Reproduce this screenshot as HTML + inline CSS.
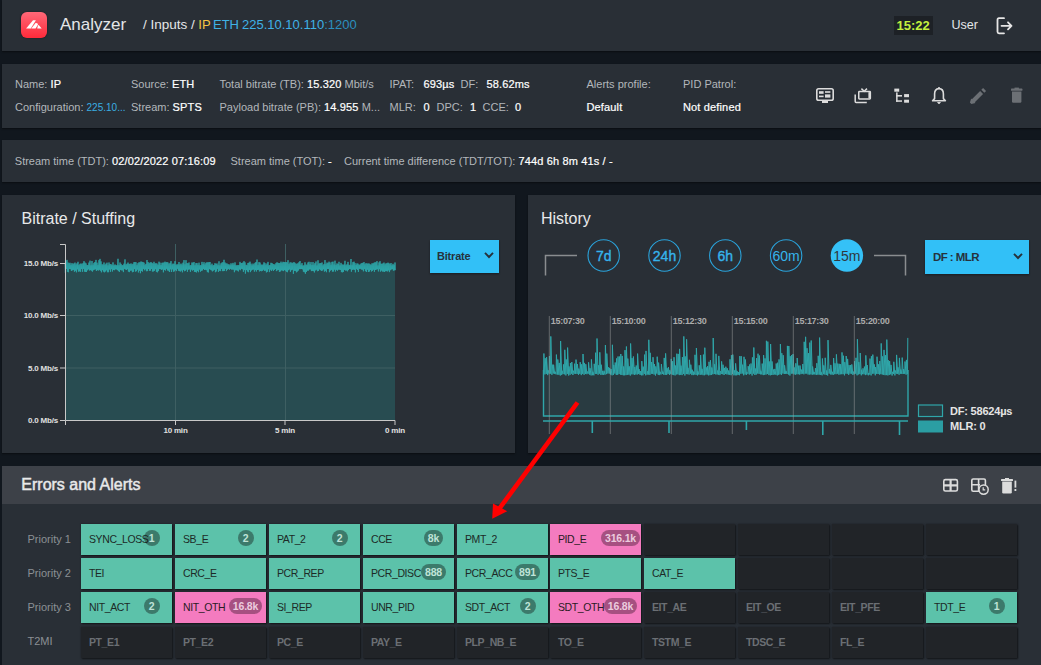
<!DOCTYPE html>
<html><head><meta charset="utf-8"><style>
*{margin:0;padding:0;box-sizing:border-box}
html,body{width:1041px;height:665px;overflow:hidden;background:#11171e;font-family:"Liberation Sans", sans-serif}
.r,.t,.c,.b{position:absolute}
.t{white-space:nowrap} .t b{color:#fff;font-weight:400;-webkit-text-stroke:0.2px #fff;letter-spacing:0.15px}
.c{width:91px;height:31px;box-shadow:1px 1px 1.5px rgba(0,0,0,.5),0 0 1.5px rgba(0,0,0,.35)}
.b{width:60px;height:16px;text-align:center;font-size:0}
.b span{display:inline-block;min-width:16px;height:16px;padding:0 4px;border-radius:8px;font:700 10.5px/16px "Liberation Sans", sans-serif;letter-spacing:-0.2px}
</style></head><body>
<div class="r" style="left:2px;top:0px;width:1039px;height:51px;background:#292f36;box-shadow:0 1px 1.5px rgba(0,0,0,.45)"></div><div class="r" style="left:2px;top:64px;width:1039px;height:64px;background:#292f36;box-shadow:0 1px 1.5px rgba(0,0,0,.45)"></div><div class="r" style="left:2px;top:140px;width:1039px;height:42px;background:#292f36;box-shadow:0 1px 1.5px rgba(0,0,0,.45)"></div><div class="r" style="left:2px;top:195px;width:513px;height:258px;background:#292f36;box-shadow:0 1px 1.5px rgba(0,0,0,.45)"></div><div class="r" style="left:528px;top:195px;width:513px;height:258px;background:#292f36;box-shadow:0 1px 1.5px rgba(0,0,0,.45)"></div><div class="r" style="left:2px;top:466px;width:1039px;height:38px;background:#3d4148;"></div><div class="r" style="left:2px;top:504px;width:1039px;height:161px;background:#292f36;"></div><div class="r" style="left:21px;top:12px;width:26px;height:26px;border-radius:6px;background:linear-gradient(#ff6878,#ff2a3a);box-shadow:0 0 2px rgba(0,0,0,.5)"></div><svg class="r" style="left:21px;top:12px" width="26" height="26" viewBox="0 0 26 26" fill="#fff"><polygon points="5.1,16.5 9.8,16.5 14.9,8.2 12.0,8.2"/><polygon points="10.3,16.5 14.6,16.5 17.0,12.6 16.4,11.2 14.6,11.1"/><polygon points="16.2,16.5 20.7,16.5 17.7,12.9 16.9,13.4"/></svg><div class="t" style="left:60.0px;top:15.91px;font-size:17px;line-height:17px;color:#e4e6e8;font-weight:400;">Analyzer</div><div class="t" style="left:143.0px;top:17.57px;font-size:13.5px;line-height:13.5px;color:#e4e6e8;font-weight:400;">/ Inputs /</div><div class="t" style="left:198.3px;top:18.00px;font-size:13px;line-height:13px;color:#f6c544;font-weight:400;">IP</div><div class="t" style="left:213.0px;top:18.00px;font-size:13px;line-height:13px;color:#3fb2e6;font-weight:400;">ETH</div><div class="t" style="left:242.0px;top:18.00px;font-size:13px;line-height:13px;color:#3fb2e6;font-weight:400;">225.10.10.110<span style="color:#2b8fbf">:1200</span></div><div class="r" style="left:894px;top:16px;width:39px;height:19px;background:#1d2126;"></div><div class="t" style="left:896.5px;top:18.50px;font-size:13px;line-height:13px;color:#c3f03e;font-weight:700;">15:22</div><div class="t" style="left:951.5px;top:19.42px;font-size:12.5px;line-height:12.5px;color:#e4e6e8;font-weight:400;">User</div><svg class="r" style="left:994px;top:15px" width="21" height="21" viewBox="0 0 21 21" fill="none" stroke="#e6e6e6" stroke-width="1.8" stroke-linecap="round" stroke-linejoin="round"><path d="M10 3.2 H5 Q3.5 3.2 3.5 4.7 V16.8 Q3.5 18.3 5 18.3 H10"/><path d="M7.5 10.8 H17.5 M14 7.3 L17.5 10.8 L14 14.3"/></svg><div class="t" style="left:15.0px;top:78.69px;font-size:11px;line-height:11px;color:#b3b7bb;font-weight:400;">Name: <b>IP</b></div><div class="t" style="left:15.0px;top:101.69px;font-size:11px;line-height:11px;color:#b3b7bb;font-weight:400;">Configuration: <span style="color:#3aaee2;font-size:10px">225.10...</span></div><div class="t" style="left:131.0px;top:78.69px;font-size:11px;line-height:11px;color:#b3b7bb;font-weight:400;">Source: <b>ETH</b></div><div class="t" style="left:131.0px;top:101.69px;font-size:11px;line-height:11px;color:#b3b7bb;font-weight:400;">Stream: <b>SPTS</b></div><div class="t" style="left:219.5px;top:78.69px;font-size:11px;line-height:11px;color:#b3b7bb;font-weight:400;">Total bitrate (TB): <b>15.320</b> Mbit/s</div><div class="t" style="left:219.5px;top:101.69px;font-size:11px;line-height:11px;color:#b3b7bb;font-weight:400;">Payload bitrate (PB): <b>14.955</b> M...</div><div class="t" style="left:389.5px;top:78.69px;font-size:11px;line-height:11px;color:#b3b7bb;font-weight:400;">IPAT:</div><div class="t" style="left:423.5px;top:78.69px;font-size:11px;line-height:11px;color:#b3b7bb;font-weight:400;"><b>693µs</b></div><div class="t" style="left:460.5px;top:78.69px;font-size:11px;line-height:11px;color:#b3b7bb;font-weight:400;">DF:</div><div class="t" style="left:486.5px;top:78.69px;font-size:11px;line-height:11px;color:#b3b7bb;font-weight:400;"><b>58.62ms</b></div><div class="t" style="left:389.5px;top:101.69px;font-size:11px;line-height:11px;color:#b3b7bb;font-weight:400;">MLR:</div><div class="t" style="left:423.5px;top:101.69px;font-size:11px;line-height:11px;color:#b3b7bb;font-weight:400;"><b>0</b></div><div class="t" style="left:436.5px;top:101.69px;font-size:11px;line-height:11px;color:#b3b7bb;font-weight:400;">DPC:</div><div class="t" style="left:470.0px;top:101.69px;font-size:11px;line-height:11px;color:#b3b7bb;font-weight:400;"><b>1</b></div><div class="t" style="left:482.5px;top:101.69px;font-size:11px;line-height:11px;color:#b3b7bb;font-weight:400;">CCE:</div><div class="t" style="left:515.0px;top:101.69px;font-size:11px;line-height:11px;color:#b3b7bb;font-weight:400;"><b>0</b></div><div class="t" style="left:586.5px;top:78.69px;font-size:11px;line-height:11px;color:#b3b7bb;font-weight:400;">Alerts profile:</div><div class="t" style="left:586.5px;top:101.69px;font-size:11px;line-height:11px;color:#b3b7bb;font-weight:400;"><b>Default</b></div><div class="t" style="left:683.0px;top:78.69px;font-size:11px;line-height:11px;color:#b3b7bb;font-weight:400;">PID Patrol:</div><div class="t" style="left:683.0px;top:101.69px;font-size:11px;line-height:11px;color:#b3b7bb;font-weight:400;"><b>Not defined</b></div><svg class="r" style="left:814px;top:86px" width="22" height="20" viewBox="0 0 22 20"><rect x="2.8" y="2.8" width="16.4" height="11.4" rx="1.8" fill="none" stroke="#dcdcdc" stroke-width="1.6"/><rect x="8" y="15" width="6" height="2" fill="#dcdcdc"/><rect x="5" y="5.2" width="4.6" height="2.6" fill="#dcdcdc"/><rect x="5" y="9.6" width="4.6" height="1.6" fill="#dcdcdc"/><rect x="11" y="5.2" width="5.4" height="1.6" fill="#dcdcdc"/><rect x="11" y="8.4" width="5.4" height="3.2" fill="#dcdcdc"/></svg><svg class="r" style="left:852px;top:86px" width="22" height="20" viewBox="0 0 22 20" fill="none" stroke="#dcdcdc" stroke-width="1.5"><path d="M3.2 8.6 V15.6 Q3.2 16.5 4.1 16.5 H14.8"/><rect x="6.75" y="5.55" width="11.6" height="7.4" rx=".6"/><path d="M9.4 2.6 L12.2 5.2 L15 2.6"/><rect x="16.4" y="6.2" width="2.4" height="6.2" fill="#dcdcdc" stroke="none"/></svg><svg class="r" style="left:892px;top:86px" width="20" height="20" viewBox="0 0 20 20" fill="#dcdcdc"><rect x="2.3" y="2.6" width="4.9" height="3.1"/><rect x="4.1" y="6.4" width="1.5" height="9.4"/><rect x="4.1" y="9" width="5.9" height="1.6"/><rect x="4.1" y="14.3" width="5.9" height="1.5"/><rect x="12.1" y="8.1" width="4.9" height="3.1"/><rect x="12.1" y="13.7" width="4.9" height="3"/></svg><svg class="r" style="left:930px;top:86px" width="18" height="20" viewBox="0 0 18 20"><path d="M9 2.6 C5.6 2.6 4.6 5 4.6 8 V12.6 L2.6 14.8 H15.4 L13.4 12.6 V8 C13.4 5 12.4 2.6 9 2.6 Z" fill="none" stroke="#dcdcdc" stroke-width="1.6" stroke-linejoin="round"/><circle cx="9" cy="2" r="1" fill="#dcdcdc"/><path d="M7.6 16.6 H10.4 L9 17.6 Z" fill="#dcdcdc" stroke="#dcdcdc" stroke-width="1"/></svg><svg class="r" style="left:968px;top:86px" width="20" height="20" viewBox="0 0 20 20"><path d="M4.6 15.4 L13.6 6.4" stroke="#6c7075" stroke-width="4.2"/><path d="M14.8 5.2 L16.6 3.4" stroke="#6c7075" stroke-width="4.2"/><polygon points="1.9,16.6 3.2,12.5 7.5,16.9 3.4,18.1" fill="#6c7075"/></svg><svg class="r" style="left:1009px;top:86px" width="16" height="20" viewBox="0 0 16 20" fill="#6c7075"><rect x="2" y="2.6" width="11.4" height="2.2" rx=".6"/><rect x="5.5" y="1.6" width="4.4" height="1.4"/><path d="M3 5.6 H12.4 V15.6 Q12.4 16.8 11.2 16.8 H4.2 Q3 16.8 3 15.6 Z"/></svg><div class="t" style="left:14.8px;top:155.99px;font-size:11px;line-height:11px;color:#b3b7bb;font-weight:400;">Stream time (TDT): <b>02/02/2022 07:16:09</b></div><div class="t" style="left:230.5px;top:155.99px;font-size:11px;line-height:11px;color:#b3b7bb;font-weight:400;">Stream time (TOT): <b>-</b></div><div class="t" style="left:344.0px;top:155.99px;font-size:11px;line-height:11px;color:#b3b7bb;font-weight:400;">Current time difference (TDT/TOT): <b>744d 6h 8m 41s / -</b></div><div class="t" style="left:21.5px;top:210.66px;font-size:16px;line-height:16px;color:#e8e9ea;font-weight:400;">Bitrate / Stuffing</div><svg class="r" style="left:0;top:0" width="1041" height="665"><rect x="65" y="266" width="330" height="155" fill="#284c51"/><line x1="65" y1="315.5" x2="395" y2="315.5" stroke="#3e5f62" stroke-width="1"/><line x1="65" y1="368" x2="395" y2="368" stroke="#3e5f62" stroke-width="1"/><line x1="175.5" y1="244" x2="175.5" y2="421" stroke="#3e5f62" stroke-width="1"/><line x1="285.5" y1="244" x2="285.5" y2="421" stroke="#3e5f62" stroke-width="1"/><polyline points="65.0,262.9 65.4,272.9 66.0,260.8 66.4,268.9 67.0,259.9 67.4,271.8 68.0,262.5 68.4,272.2 69.0,263.2 69.4,269.0 70.0,262.8 70.4,269.2 71.0,264.8 71.4,270.9 72.0,263.1 72.4,270.3 73.0,264.3 73.4,269.9 74.0,263.4 74.4,271.7 75.0,262.6 75.4,270.7 76.0,264.5 76.4,272.3 77.0,263.3 77.4,269.3 78.0,261.8 78.4,271.6 79.0,265.0 79.4,271.3 80.0,263.9 80.4,271.8 81.0,263.5 81.4,269.0 82.0,264.2 82.4,271.8 83.0,263.2 83.4,268.9 84.0,261.2 84.4,271.6 85.0,262.6 85.4,271.9 86.0,263.4 86.4,272.0 87.0,265.0 87.4,270.3 88.0,265.1 88.4,269.3 89.0,262.6 89.4,270.5 90.0,260.7 90.4,270.1 91.0,265.3 91.4,270.7 92.0,261.0 92.4,271.6 93.0,264.7 93.4,270.2 94.0,262.9 94.4,269.6 95.0,262.0 95.4,269.3 96.0,259.9 96.4,271.0 97.0,262.7 97.4,270.1 98.0,264.9 98.4,270.5 99.0,260.2 99.4,269.8 100.0,258.9 100.4,270.7 101.0,261.4 101.4,272.3 102.0,264.3 102.4,270.1 103.0,264.6 103.4,271.6 104.0,262.5 104.4,272.3 105.0,264.8 105.4,271.5 106.0,263.7 106.4,270.3 107.0,262.7 107.4,272.2 108.0,265.3 108.4,272.2 109.0,262.5 109.4,269.5 110.0,264.1 110.4,271.8 111.0,264.2 111.4,269.1 112.0,265.2 112.4,271.5 113.0,262.4 113.4,270.0 114.0,265.4 114.4,270.2 115.0,264.5 115.4,269.3 116.0,265.1 116.4,269.3 117.0,265.4 117.4,270.1 118.0,258.8 118.4,271.1 119.0,265.2 119.4,271.9 120.0,262.5 120.4,269.9 121.0,263.9 121.4,270.3 122.0,265.2 122.4,270.4 123.0,265.1 123.4,272.1 124.0,263.7 124.4,268.9 125.0,259.4 125.4,269.4 126.0,264.5 126.4,270.0 127.0,263.8 127.4,269.2 128.0,262.6 128.4,271.6 129.0,263.8 129.4,272.1 130.0,264.0 130.4,270.6 131.0,263.4 131.4,270.5 132.0,264.4 132.4,272.2 133.0,263.8 133.4,271.8 134.0,262.2 134.4,269.1 135.0,262.0 135.4,271.6 136.0,262.3 136.4,271.2 137.0,265.1 137.4,269.6 138.0,263.2 138.4,272.4 139.0,262.3 139.4,270.7 140.0,262.4 140.4,273.2 141.0,261.5 141.4,271.0 142.0,261.9 142.4,271.6 143.0,262.1 143.4,268.9 144.0,262.7 144.4,270.3 145.0,264.8 145.4,269.3 146.0,263.9 146.4,271.2 147.0,260.0 147.4,271.1 148.0,262.0 148.4,269.0 149.0,263.4 149.4,270.8 150.0,262.7 150.4,270.7 151.0,262.1 151.4,269.0 152.0,262.9 152.4,271.5 153.0,263.6 153.4,271.4 154.0,261.8 154.4,270.8 155.0,263.5 155.4,269.2 156.0,263.3 156.4,271.8 157.0,263.6 157.4,272.3 158.0,264.9 158.4,271.1 159.0,261.7 159.4,269.1 160.0,262.7 160.4,269.1 161.0,265.0 161.4,269.8 162.0,262.8 162.4,269.4 163.0,262.7 163.4,272.3 164.0,262.6 164.4,269.9 165.0,261.7 165.4,270.5 166.0,262.5 166.4,268.8 167.0,262.0 167.4,270.4 168.0,262.6 168.4,270.7 169.0,264.2 169.4,272.0 170.0,262.9 170.4,269.3 171.0,261.1 171.4,272.0 172.0,264.5 172.4,269.3 173.0,263.6 173.4,271.7 174.0,263.9 174.4,271.3 175.0,261.2 175.4,270.1 176.0,264.9 176.4,271.1 177.0,264.3 177.4,268.8 178.0,264.5 178.4,270.7 179.0,262.0 179.4,271.1 180.0,264.5 180.4,271.5 181.0,263.6 181.4,270.5 182.0,264.6 182.4,272.3 183.0,262.7 183.4,269.9 184.0,260.1 184.4,271.2 185.0,264.3 185.4,270.7 186.0,260.2 186.4,269.5 187.0,263.1 187.4,271.8 188.0,263.4 188.4,269.6 189.0,262.5 189.4,269.3 190.0,265.3 190.4,271.8 191.0,265.1 191.4,269.6 192.0,262.5 192.4,270.6 193.0,262.8 193.4,270.0 194.0,262.0 194.4,271.8 195.0,265.2 195.4,272.0 196.0,263.1 196.4,272.4 197.0,263.1 197.4,270.9 198.0,264.9 198.4,272.2 199.0,262.7 199.4,269.5 200.0,265.3 200.4,271.7 201.0,265.2 201.4,270.8 202.0,261.9 202.4,270.4 203.0,264.1 203.4,269.0 204.0,262.2 204.4,270.0 205.0,264.5 205.4,269.7 206.0,262.8 206.4,270.2 207.0,262.3 207.4,272.1 208.0,262.5 208.4,272.4 209.0,262.2 209.4,269.1 210.0,262.0 210.4,269.7 211.0,265.1 211.4,270.3 212.0,263.7 212.4,271.4 213.0,265.4 213.4,270.6 214.0,265.0 214.4,269.8 215.0,263.2 215.4,272.2 216.0,263.9 216.4,271.4 217.0,263.5 217.4,268.8 218.0,265.2 218.4,271.9 219.0,261.3 219.4,270.7 220.0,265.3 220.4,271.1 221.0,263.4 221.4,268.9 222.0,262.6 222.4,271.1 223.0,262.2 223.4,271.1 224.0,259.8 224.4,270.9 225.0,262.5 225.4,268.8 226.0,263.5 226.4,271.1 227.0,263.5 227.4,269.7 228.0,264.4 228.4,268.9 229.0,264.3 229.4,269.7 230.0,265.2 230.4,268.9 231.0,263.3 231.4,269.5 232.0,264.5 232.4,269.5 233.0,262.9 233.4,269.6 234.0,264.6 234.4,272.2 235.0,262.4 235.4,270.3 236.0,265.3 236.4,270.2 237.0,265.4 237.4,270.6 238.0,265.1 238.4,271.4 239.0,265.2 239.4,269.5 240.0,261.9 240.4,270.2 241.0,263.0 241.4,268.8 242.0,263.0 242.4,269.2 243.0,262.5 243.4,271.8 244.0,261.2 244.4,270.1 245.0,262.4 245.4,273.6 246.0,264.8 246.4,270.0 247.0,265.2 247.4,271.5 248.0,263.0 248.4,272.2 249.0,262.7 249.4,269.9 250.0,261.7 250.4,272.1 251.0,263.7 251.4,270.5 252.0,265.3 252.4,269.7 253.0,263.6 253.4,269.5 254.0,264.5 254.4,271.6 255.0,262.9 255.4,270.1 256.0,262.0 256.4,271.5 257.0,259.6 257.4,270.0 258.0,265.1 258.4,269.8 259.0,262.1 259.4,271.4 260.0,262.6 260.4,271.0 261.0,264.5 261.4,271.2 262.0,264.9 262.4,270.8 263.0,264.5 263.4,269.7 264.0,262.3 264.4,270.9 265.0,263.2 265.4,270.6 266.0,264.8 266.4,272.4 267.0,263.5 267.4,271.8 268.0,261.9 268.4,269.2 269.0,265.4 269.4,272.1 270.0,265.0 270.4,269.7 271.0,262.8 271.4,271.0 272.0,263.1 272.4,269.5 273.0,264.0 273.4,271.0 274.0,264.3 274.4,269.9 275.0,264.7 275.4,269.0 276.0,263.2 276.4,271.1 277.0,262.3 277.4,270.3 278.0,262.9 278.4,269.9 279.0,263.1 279.4,271.9 280.0,263.1 280.4,271.4 281.0,261.7 281.4,270.3 282.0,263.2 282.4,270.5 283.0,261.8 283.4,271.1 284.0,262.0 284.4,270.1 285.0,262.3 285.4,270.7 286.0,262.1 286.4,271.7 287.0,262.4 287.4,272.2 288.0,260.2 288.4,270.2 289.0,264.1 289.4,269.4 290.0,262.5 290.4,271.8 291.0,262.4 291.4,270.2 292.0,263.2 292.4,269.7 293.0,262.7 293.4,273.8 294.0,262.1 294.4,270.8 295.0,262.9 295.4,270.9 296.0,264.2 296.4,272.3 297.0,263.6 297.4,271.5 298.0,263.4 298.4,270.5 299.0,262.2 299.4,269.1 300.0,261.0 300.4,269.1 301.0,264.7 301.4,269.0 302.0,263.1 302.4,269.3 303.0,265.5 303.4,271.7 304.0,265.4 304.4,272.2 305.0,262.3 305.4,273.7 306.0,264.6 306.4,272.0 307.0,264.8 307.4,270.6 308.0,262.5 308.4,270.6 309.0,261.8 309.4,269.4 310.0,264.3 310.4,269.4 311.0,262.1 311.4,271.1 312.0,265.0 312.4,270.9 313.0,262.1 313.4,271.1 314.0,264.7 314.4,272.4 315.0,263.1 315.4,270.4 316.0,261.5 316.4,269.7 317.0,265.4 317.4,271.2 318.0,260.3 318.4,271.0 319.0,263.6 319.4,269.3 320.0,263.2 320.4,270.1 321.0,263.1 321.4,270.9 322.0,262.5 322.4,270.5 323.0,265.3 323.4,269.3 324.0,264.1 324.4,271.6 325.0,260.1 325.4,270.8 326.0,264.2 326.4,272.2 327.0,262.6 327.4,269.0 328.0,263.2 328.4,269.0 329.0,261.7 329.4,272.2 330.0,262.5 330.4,270.6 331.0,264.8 331.4,269.9 332.0,261.9 332.4,271.6 333.0,261.7 333.4,271.5 334.0,264.5 334.4,269.6 335.0,260.7 335.4,271.5 336.0,264.9 336.4,269.8 337.0,263.4 337.4,270.7 338.0,264.1 338.4,269.6 339.0,261.8 339.4,269.6 340.0,265.3 340.4,270.0 341.0,262.9 341.4,272.1 342.0,264.3 342.4,272.3 343.0,264.9 343.4,271.9 344.0,264.5 344.4,269.9 345.0,260.8 345.4,270.5 346.0,265.2 346.4,270.4 347.0,264.3 347.4,271.3 348.0,261.9 348.4,270.1 349.0,264.8 349.4,269.0 350.0,265.2 350.4,269.2 351.0,259.0 351.4,271.7 352.0,264.8 352.4,269.8 353.0,262.1 353.4,269.5 354.0,261.7 354.4,269.8 355.0,263.1 355.4,272.3 356.0,264.9 356.4,268.9 357.0,263.4 357.4,270.0 358.0,263.7 358.4,271.9 359.0,264.8 359.4,268.8 360.0,264.6 360.4,268.8 361.0,263.6 361.4,269.5 362.0,263.0 362.4,269.7 363.0,262.8 363.4,271.3 364.0,262.1 364.4,269.1 365.0,264.3 365.4,271.1 366.0,263.2 366.4,272.0 367.0,263.6 367.4,269.7 368.0,263.6 368.4,272.0 369.0,263.5 369.4,271.5 370.0,264.2 370.4,270.0 371.0,264.9 371.4,271.5 372.0,263.4 372.4,270.9 373.0,263.5 373.4,269.7 374.0,262.8 374.4,271.8 375.0,262.3 375.4,270.0 376.0,262.3 376.4,269.5 377.0,261.1 377.4,269.2 378.0,265.4 378.4,271.4 379.0,262.4 379.4,269.2 380.0,261.2 380.4,271.6 381.0,263.6 381.4,270.5 382.0,264.0 382.4,271.5 383.0,263.3 383.4,271.5 384.0,262.6 384.4,272.0 385.0,264.4 385.4,271.2 386.0,263.4 386.4,271.1 387.0,263.3 387.4,271.4 388.0,262.7 388.4,270.4 389.0,263.3 389.4,272.1 390.0,264.2 390.4,270.2 391.0,263.0 391.4,269.4 392.0,265.3 392.4,269.2 393.0,263.8 393.4,270.6 394.0,264.9 394.4,270.3 395.0,262.5 395.4,270.2" fill="none" stroke="#2ca6a8" stroke-width="0.9"/><path d="M60 244.5 H65.5 V420.5 H395 M395 420.5 V425 M285 420.5 V425 M175.5 420.5 V425 M65.5 420.5 V425 M60 263.5 H65 M60 315.5 H65 M60 368 H65 M60 420.5 H65" fill="none" stroke="#c8c8c8" stroke-width="1"/></svg><div class="t" style="right:983px;top:259.0px;font-size:8px;line-height:9px;color:#e0e0e0;font-weight:700;letter-spacing:-0.2px">15.0 Mb/s</div><div class="t" style="right:983px;top:311.0px;font-size:8px;line-height:9px;color:#e0e0e0;font-weight:700;letter-spacing:-0.2px">10.0 Mb/s</div><div class="t" style="right:983px;top:363.5px;font-size:8px;line-height:9px;color:#e0e0e0;font-weight:700;letter-spacing:-0.2px">5.0 Mb/s</div><div class="t" style="right:983px;top:416.0px;font-size:8px;line-height:9px;color:#e0e0e0;font-weight:700;letter-spacing:-0.2px">0.0 Mb/s</div><div class="t" style="left:145.5px;width:60px;text-align:center;top:426px;font-size:8px;line-height:9px;color:#e0e0e0;font-weight:700;letter-spacing:-0.2px">10 min</div><div class="t" style="left:255px;width:60px;text-align:center;top:426px;font-size:8px;line-height:9px;color:#e0e0e0;font-weight:700;letter-spacing:-0.2px">5 min</div><div class="t" style="left:365px;width:60px;text-align:center;top:426px;font-size:8px;line-height:9px;color:#e0e0e0;font-weight:700;letter-spacing:-0.2px">0 min</div><div class="r" style="left:430px;top:240px;width:69px;height:33px;background:#32c0f7;box-shadow:0 1px 2px rgba(0,0,0,.4)"></div><div class="t" style="left:437.0px;top:250.99px;font-size:11px;line-height:11px;color:#26323c;font-weight:700;letter-spacing:-0.2px">Bitrate</div><svg class="r" style="left:482.5px;top:251px" width="12" height="9" viewBox="0 0 12 9"><path d="M2 1.8 L6 6 L10 1.8" fill="none" stroke="#26323c" stroke-width="1.9"/></svg><div class="t" style="left:541.0px;top:210.66px;font-size:16px;line-height:16px;color:#e8e9ea;font-weight:400;">History</div><svg class="r" style="left:0;top:0" width="1041" height="665"><path d="M545.5 275.5 V255.5 H577 M874 255.5 H905.5 V275.5" fill="none" stroke="#8a8d90" stroke-width="1.5"/><circle cx="603.7" cy="255.5" r="15.7" fill="none" stroke="#2aa3db" stroke-width="1.1"/><circle cx="664.5" cy="255.5" r="15.7" fill="none" stroke="#2aa3db" stroke-width="1.1"/><circle cx="725.3" cy="255.5" r="15.7" fill="none" stroke="#2aa3db" stroke-width="1.1"/><circle cx="786.1" cy="255.5" r="15.7" fill="none" stroke="#2aa3db" stroke-width="1.1"/><circle cx="846.9" cy="255.5" r="16.2" fill="#35c1f7"/><polygon points="543.5,416 543.5,374.4 543.9,353.5 544.9,374.4 545.2,358.2 546.3,373.9 546.6,357.1 547.7,375.1 548.0,370.1 549.1,373.7 549.4,356.0 550.5,373.6 550.8,336.4 551.9,374.8 552.2,364.6 553.3,373.5 553.6,364.7 554.7,373.9 555.0,371.6 556.1,374.4 556.4,354.6 557.5,374.5 557.8,359.5 558.9,374.8 559.2,362.9 560.3,375.5 560.6,341.0 561.7,374.9 562.0,370.6 563.1,374.1 563.4,364.4 564.5,374.3 564.8,349.8 565.9,375.4 566.2,359.4 567.3,373.9 567.6,347.6 568.7,375.5 569.0,366.4 570.1,374.8 570.4,363.0 571.5,373.7 571.8,362.0 572.9,375.0 573.2,370.6 574.3,373.7 574.6,363.7 575.7,373.9 576.0,359.6 577.1,373.9 577.4,364.0 578.5,374.8 578.8,368.6 579.9,373.9 580.2,362.2 581.3,375.1 581.6,364.3 582.7,373.9 583.0,354.0 584.1,374.8 584.4,362.9 585.5,373.9 585.8,364.2 586.9,374.2 587.2,371.4 588.3,373.7 588.6,362.3 589.7,374.7 590.0,368.2 591.1,375.4 591.4,359.4 592.5,375.2 592.8,371.7 593.9,375.3 594.2,363.8 595.3,373.9 595.6,352.7 596.7,373.9 597.0,338.5 598.1,374.7 598.4,365.3 599.5,373.6 599.8,352.3 600.9,374.9 601.2,364.7 602.3,374.7 602.6,370.9 603.7,374.9 604.0,370.7 605.1,374.6 605.4,345.1 606.5,374.1 606.8,353.6 607.9,373.5 608.2,367.1 609.3,373.6 609.6,367.9 610.7,374.6 611.0,369.0 612.1,375.3 612.4,344.8 613.5,374.9 613.8,364.9 614.9,373.6 615.2,362.5 616.3,374.9 616.6,358.4 617.7,374.8 618.0,356.5 619.1,374.1 619.4,356.5 620.5,374.6 620.8,354.0 621.9,375.0 622.2,355.9 623.3,375.3 623.6,366.5 624.7,375.3 625.0,350.1 626.1,375.1 626.4,346.5 627.5,374.7 627.8,358.6 628.9,374.7 629.2,366.3 630.3,375.5 630.6,343.5 631.7,374.3 632.0,358.1 633.1,374.4 633.4,356.5 634.5,375.0 634.8,367.0 635.9,374.5 636.2,365.5 637.3,374.5 637.6,353.6 638.7,374.0 639.0,369.0 640.1,374.9 640.4,371.2 641.5,375.3 641.8,361.1 642.9,375.3 643.2,366.6 644.3,373.9 644.6,354.6 645.7,375.3 646.0,350.9 647.1,374.7 647.4,371.3 648.5,374.5 648.8,339.8 649.9,374.9 650.2,352.8 651.3,373.8 651.6,362.0 652.7,373.9 653.0,357.2 654.1,374.5 654.4,364.1 655.5,375.5 655.8,366.4 656.9,373.6 657.2,356.7 658.3,374.9 658.6,362.6 659.7,375.1 660.0,371.7 661.1,374.4 661.4,364.1 662.5,374.0 662.8,371.5 663.9,374.8 664.2,357.9 665.3,374.8 665.6,353.4 666.7,374.9 667.0,368.1 668.1,373.9 668.4,367.1 669.5,374.9 669.8,370.2 670.9,374.2 671.2,358.9 672.3,374.7 672.6,361.2 673.7,375.1 674.0,357.2 675.1,375.4 675.4,365.5 676.5,374.4 676.8,353.7 677.9,374.3 678.2,353.9 679.3,375.1 679.6,348.9 680.7,374.8 681.0,365.6 682.1,375.1 682.4,357.1 683.5,373.9 683.8,336.4 684.9,375.5 685.2,356.4 686.3,374.1 686.6,339.3 687.7,374.2 688.0,367.8 689.1,374.6 689.4,359.8 690.5,373.6 690.8,364.7 691.9,375.1 692.2,369.7 693.3,375.1 693.6,371.6 694.7,374.5 695.0,354.8 696.1,374.9 696.4,348.0 697.5,375.4 697.8,371.2 698.9,374.6 699.2,365.3 700.3,374.8 700.6,355.0 701.7,374.6 702.0,368.8 703.1,375.2 703.4,354.6 704.5,375.2 704.8,347.7 705.9,374.6 706.2,367.3 707.3,374.5 707.6,366.1 708.7,375.4 709.0,361.8 710.1,375.1 710.4,360.2 711.5,374.9 711.8,367.5 712.9,374.3 713.2,338.0 714.3,374.0 714.6,364.3 715.7,374.4 716.0,353.8 717.1,374.5 717.4,370.5 718.5,374.7 718.8,355.9 719.9,375.1 720.2,371.1 721.3,374.0 721.6,361.4 722.7,374.2 723.0,364.7 724.1,375.0 724.4,367.9 725.5,374.0 725.8,366.7 726.9,374.4 727.2,368.2 728.3,374.6 728.6,370.5 729.7,374.8 730.0,359.3 731.1,375.2 731.4,355.2 732.5,374.0 732.8,354.6 733.9,375.3 734.2,370.2 735.3,375.3 735.6,363.4 736.7,375.3 737.0,370.9 738.1,375.0 738.4,372.0 739.5,375.2 739.8,356.1 740.9,373.8 741.2,356.2 742.3,373.5 742.6,364.7 743.7,375.3 744.0,356.8 745.1,374.5 745.4,359.5 746.5,374.9 746.8,372.2 747.9,373.7 748.2,366.2 749.3,374.5 749.6,364.5 750.7,373.9 751.0,363.5 752.1,375.5 752.4,357.4 753.5,373.6 753.8,347.5 754.9,375.0 755.2,368.4 756.3,374.5 756.6,358.1 757.7,373.5 758.0,353.7 759.1,373.9 759.4,355.5 760.5,374.3 760.8,370.7 761.9,374.5 762.2,363.6 763.3,375.1 763.6,355.1 764.7,374.8 765.0,358.4 766.1,374.5 766.4,340.8 767.5,374.0 767.8,341.6 768.9,375.1 769.2,361.4 770.3,375.3 770.6,344.0 771.7,375.0 772.0,361.4 773.1,374.9 773.4,369.5 774.5,374.4 774.8,368.9 775.9,374.8 776.2,363.5 777.3,375.4 777.6,362.7 778.7,374.8 779.0,359.4 780.1,374.3 780.4,344.1 781.5,374.9 781.8,353.2 782.9,373.5 783.2,355.2 784.3,374.0 784.6,365.3 785.7,373.9 786.0,370.9 787.1,374.0 787.4,345.9 788.5,374.5 788.8,346.0 789.9,375.5 790.2,356.2 791.3,373.7 791.6,355.0 792.7,373.6 793.0,354.1 794.1,374.4 794.4,367.5 795.5,374.7 795.8,363.3 796.9,374.3 797.2,358.0 798.3,374.2 798.6,365.7 799.7,374.6 800.0,365.5 801.1,374.1 801.4,369.6 802.5,373.6 802.8,364.0 803.9,374.3 804.2,341.8 805.3,373.6 805.6,336.8 806.7,373.6 807.0,348.2 808.1,374.5 808.4,353.1 809.5,374.5 809.8,342.6 810.9,374.4 811.2,340.5 812.3,374.7 812.6,366.5 813.7,374.4 814.0,371.9 815.1,374.6 815.4,368.1 816.5,374.8 816.8,363.2 817.9,374.7 818.2,355.8 819.3,374.6 819.6,337.6 820.7,375.0 821.0,371.8 822.1,375.3 822.4,358.5 823.5,374.2 823.8,365.4 824.9,374.6 825.2,357.8 826.3,375.0 826.6,370.5 827.7,375.5 828.0,340.1 829.1,373.6 829.4,368.9 830.5,374.4 830.8,364.9 831.9,374.6 832.2,371.7 833.3,374.9 833.6,358.0 834.7,374.2 835.0,363.3 836.1,374.2 836.4,354.4 837.5,373.6 837.8,363.6 838.9,374.7 839.2,363.8 840.3,374.3 840.6,364.2 841.7,374.2 842.0,352.4 843.1,374.2 843.4,355.7 844.5,375.3 844.8,362.2 845.9,373.7 846.2,356.0 847.3,373.7 847.6,358.9 848.7,374.9 849.0,365.1 850.1,373.7 850.4,365.0 851.5,373.7 851.8,364.4 852.9,374.9 853.2,371.5 854.3,374.2 854.6,361.1 855.7,373.7 856.0,357.8 857.1,375.3 857.4,339.2 858.5,374.4 858.8,362.1 859.9,374.1 860.2,353.0 861.3,375.3 861.6,369.7 862.7,374.2 863.0,368.3 864.1,374.3 864.4,366.6 865.5,375.1 865.8,355.4 866.9,374.6 867.2,365.0 868.3,375.3 868.6,373.0 869.7,374.5 870.0,358.6 871.1,375.4 871.4,356.2 872.5,373.6 872.8,354.6 873.9,373.7 874.2,364.3 875.3,375.3 875.6,367.0 876.7,373.8 877.0,356.7 878.1,374.0 878.4,364.3 879.5,374.5 879.8,361.0 880.9,374.2 881.2,343.4 882.3,374.5 882.6,356.4 883.7,374.9 884.0,349.9 885.1,375.2 885.4,355.2 886.5,375.1 886.8,339.6 887.9,375.4 888.2,360.1 889.3,374.9 889.6,361.0 890.7,374.3 891.0,364.9 892.1,375.5 892.4,371.8 893.5,373.9 893.8,361.8 894.9,375.4 895.2,370.4 896.3,373.7 896.6,354.9 897.7,373.9 898.0,367.3 899.1,374.7 899.4,357.9 900.5,373.7 900.8,369.5 901.9,374.0 902.2,357.6 903.3,373.9 903.6,369.1 904.7,373.8 905.0,361.5 906.1,374.6 906.4,359.9 907.5,374.0 907.8,337.9 908,416" fill="#293b41"/><polyline points="543.5,374.4 543.9,353.5 544.9,374.4 545.2,358.2 546.3,373.9 546.6,357.1 547.7,375.1 548.0,370.1 549.1,373.7 549.4,356.0 550.5,373.6 550.8,336.4 551.9,374.8 552.2,364.6 553.3,373.5 553.6,364.7 554.7,373.9 555.0,371.6 556.1,374.4 556.4,354.6 557.5,374.5 557.8,359.5 558.9,374.8 559.2,362.9 560.3,375.5 560.6,341.0 561.7,374.9 562.0,370.6 563.1,374.1 563.4,364.4 564.5,374.3 564.8,349.8 565.9,375.4 566.2,359.4 567.3,373.9 567.6,347.6 568.7,375.5 569.0,366.4 570.1,374.8 570.4,363.0 571.5,373.7 571.8,362.0 572.9,375.0 573.2,370.6 574.3,373.7 574.6,363.7 575.7,373.9 576.0,359.6 577.1,373.9 577.4,364.0 578.5,374.8 578.8,368.6 579.9,373.9 580.2,362.2 581.3,375.1 581.6,364.3 582.7,373.9 583.0,354.0 584.1,374.8 584.4,362.9 585.5,373.9 585.8,364.2 586.9,374.2 587.2,371.4 588.3,373.7 588.6,362.3 589.7,374.7 590.0,368.2 591.1,375.4 591.4,359.4 592.5,375.2 592.8,371.7 593.9,375.3 594.2,363.8 595.3,373.9 595.6,352.7 596.7,373.9 597.0,338.5 598.1,374.7 598.4,365.3 599.5,373.6 599.8,352.3 600.9,374.9 601.2,364.7 602.3,374.7 602.6,370.9 603.7,374.9 604.0,370.7 605.1,374.6 605.4,345.1 606.5,374.1 606.8,353.6 607.9,373.5 608.2,367.1 609.3,373.6 609.6,367.9 610.7,374.6 611.0,369.0 612.1,375.3 612.4,344.8 613.5,374.9 613.8,364.9 614.9,373.6 615.2,362.5 616.3,374.9 616.6,358.4 617.7,374.8 618.0,356.5 619.1,374.1 619.4,356.5 620.5,374.6 620.8,354.0 621.9,375.0 622.2,355.9 623.3,375.3 623.6,366.5 624.7,375.3 625.0,350.1 626.1,375.1 626.4,346.5 627.5,374.7 627.8,358.6 628.9,374.7 629.2,366.3 630.3,375.5 630.6,343.5 631.7,374.3 632.0,358.1 633.1,374.4 633.4,356.5 634.5,375.0 634.8,367.0 635.9,374.5 636.2,365.5 637.3,374.5 637.6,353.6 638.7,374.0 639.0,369.0 640.1,374.9 640.4,371.2 641.5,375.3 641.8,361.1 642.9,375.3 643.2,366.6 644.3,373.9 644.6,354.6 645.7,375.3 646.0,350.9 647.1,374.7 647.4,371.3 648.5,374.5 648.8,339.8 649.9,374.9 650.2,352.8 651.3,373.8 651.6,362.0 652.7,373.9 653.0,357.2 654.1,374.5 654.4,364.1 655.5,375.5 655.8,366.4 656.9,373.6 657.2,356.7 658.3,374.9 658.6,362.6 659.7,375.1 660.0,371.7 661.1,374.4 661.4,364.1 662.5,374.0 662.8,371.5 663.9,374.8 664.2,357.9 665.3,374.8 665.6,353.4 666.7,374.9 667.0,368.1 668.1,373.9 668.4,367.1 669.5,374.9 669.8,370.2 670.9,374.2 671.2,358.9 672.3,374.7 672.6,361.2 673.7,375.1 674.0,357.2 675.1,375.4 675.4,365.5 676.5,374.4 676.8,353.7 677.9,374.3 678.2,353.9 679.3,375.1 679.6,348.9 680.7,374.8 681.0,365.6 682.1,375.1 682.4,357.1 683.5,373.9 683.8,336.4 684.9,375.5 685.2,356.4 686.3,374.1 686.6,339.3 687.7,374.2 688.0,367.8 689.1,374.6 689.4,359.8 690.5,373.6 690.8,364.7 691.9,375.1 692.2,369.7 693.3,375.1 693.6,371.6 694.7,374.5 695.0,354.8 696.1,374.9 696.4,348.0 697.5,375.4 697.8,371.2 698.9,374.6 699.2,365.3 700.3,374.8 700.6,355.0 701.7,374.6 702.0,368.8 703.1,375.2 703.4,354.6 704.5,375.2 704.8,347.7 705.9,374.6 706.2,367.3 707.3,374.5 707.6,366.1 708.7,375.4 709.0,361.8 710.1,375.1 710.4,360.2 711.5,374.9 711.8,367.5 712.9,374.3 713.2,338.0 714.3,374.0 714.6,364.3 715.7,374.4 716.0,353.8 717.1,374.5 717.4,370.5 718.5,374.7 718.8,355.9 719.9,375.1 720.2,371.1 721.3,374.0 721.6,361.4 722.7,374.2 723.0,364.7 724.1,375.0 724.4,367.9 725.5,374.0 725.8,366.7 726.9,374.4 727.2,368.2 728.3,374.6 728.6,370.5 729.7,374.8 730.0,359.3 731.1,375.2 731.4,355.2 732.5,374.0 732.8,354.6 733.9,375.3 734.2,370.2 735.3,375.3 735.6,363.4 736.7,375.3 737.0,370.9 738.1,375.0 738.4,372.0 739.5,375.2 739.8,356.1 740.9,373.8 741.2,356.2 742.3,373.5 742.6,364.7 743.7,375.3 744.0,356.8 745.1,374.5 745.4,359.5 746.5,374.9 746.8,372.2 747.9,373.7 748.2,366.2 749.3,374.5 749.6,364.5 750.7,373.9 751.0,363.5 752.1,375.5 752.4,357.4 753.5,373.6 753.8,347.5 754.9,375.0 755.2,368.4 756.3,374.5 756.6,358.1 757.7,373.5 758.0,353.7 759.1,373.9 759.4,355.5 760.5,374.3 760.8,370.7 761.9,374.5 762.2,363.6 763.3,375.1 763.6,355.1 764.7,374.8 765.0,358.4 766.1,374.5 766.4,340.8 767.5,374.0 767.8,341.6 768.9,375.1 769.2,361.4 770.3,375.3 770.6,344.0 771.7,375.0 772.0,361.4 773.1,374.9 773.4,369.5 774.5,374.4 774.8,368.9 775.9,374.8 776.2,363.5 777.3,375.4 777.6,362.7 778.7,374.8 779.0,359.4 780.1,374.3 780.4,344.1 781.5,374.9 781.8,353.2 782.9,373.5 783.2,355.2 784.3,374.0 784.6,365.3 785.7,373.9 786.0,370.9 787.1,374.0 787.4,345.9 788.5,374.5 788.8,346.0 789.9,375.5 790.2,356.2 791.3,373.7 791.6,355.0 792.7,373.6 793.0,354.1 794.1,374.4 794.4,367.5 795.5,374.7 795.8,363.3 796.9,374.3 797.2,358.0 798.3,374.2 798.6,365.7 799.7,374.6 800.0,365.5 801.1,374.1 801.4,369.6 802.5,373.6 802.8,364.0 803.9,374.3 804.2,341.8 805.3,373.6 805.6,336.8 806.7,373.6 807.0,348.2 808.1,374.5 808.4,353.1 809.5,374.5 809.8,342.6 810.9,374.4 811.2,340.5 812.3,374.7 812.6,366.5 813.7,374.4 814.0,371.9 815.1,374.6 815.4,368.1 816.5,374.8 816.8,363.2 817.9,374.7 818.2,355.8 819.3,374.6 819.6,337.6 820.7,375.0 821.0,371.8 822.1,375.3 822.4,358.5 823.5,374.2 823.8,365.4 824.9,374.6 825.2,357.8 826.3,375.0 826.6,370.5 827.7,375.5 828.0,340.1 829.1,373.6 829.4,368.9 830.5,374.4 830.8,364.9 831.9,374.6 832.2,371.7 833.3,374.9 833.6,358.0 834.7,374.2 835.0,363.3 836.1,374.2 836.4,354.4 837.5,373.6 837.8,363.6 838.9,374.7 839.2,363.8 840.3,374.3 840.6,364.2 841.7,374.2 842.0,352.4 843.1,374.2 843.4,355.7 844.5,375.3 844.8,362.2 845.9,373.7 846.2,356.0 847.3,373.7 847.6,358.9 848.7,374.9 849.0,365.1 850.1,373.7 850.4,365.0 851.5,373.7 851.8,364.4 852.9,374.9 853.2,371.5 854.3,374.2 854.6,361.1 855.7,373.7 856.0,357.8 857.1,375.3 857.4,339.2 858.5,374.4 858.8,362.1 859.9,374.1 860.2,353.0 861.3,375.3 861.6,369.7 862.7,374.2 863.0,368.3 864.1,374.3 864.4,366.6 865.5,375.1 865.8,355.4 866.9,374.6 867.2,365.0 868.3,375.3 868.6,373.0 869.7,374.5 870.0,358.6 871.1,375.4 871.4,356.2 872.5,373.6 872.8,354.6 873.9,373.7 874.2,364.3 875.3,375.3 875.6,367.0 876.7,373.8 877.0,356.7 878.1,374.0 878.4,364.3 879.5,374.5 879.8,361.0 880.9,374.2 881.2,343.4 882.3,374.5 882.6,356.4 883.7,374.9 884.0,349.9 885.1,375.2 885.4,355.2 886.5,375.1 886.8,339.6 887.9,375.4 888.2,360.1 889.3,374.9 889.6,361.0 890.7,374.3 891.0,364.9 892.1,375.5 892.4,371.8 893.5,373.9 893.8,361.8 894.9,375.4 895.2,370.4 896.3,373.7 896.6,354.9 897.7,373.9 898.0,367.3 899.1,374.7 899.4,357.9 900.5,373.7 900.8,369.5 901.9,374.0 902.2,357.6 903.3,373.9 903.6,369.1 904.7,373.8 905.0,361.5 906.1,374.6 906.4,359.9 907.5,374.0 907.8,337.9" fill="none" stroke="#2fa6a9" stroke-width="1"/><path d="M543.5 370 V416 H908 V370" fill="none" stroke="#2fa6a9" stroke-width="1.4"/><line x1="549.3" y1="316" x2="549.3" y2="434" stroke="rgba(160,160,160,.5)" stroke-width="1"/><line x1="610.3" y1="316" x2="610.3" y2="434" stroke="rgba(160,160,160,.5)" stroke-width="1"/><line x1="671.3" y1="316" x2="671.3" y2="434" stroke="rgba(160,160,160,.5)" stroke-width="1"/><line x1="732.3" y1="316" x2="732.3" y2="434" stroke="rgba(160,160,160,.5)" stroke-width="1"/><line x1="793.3" y1="316" x2="793.3" y2="434" stroke="rgba(160,160,160,.5)" stroke-width="1"/><line x1="854.3" y1="316" x2="854.3" y2="434" stroke="rgba(160,160,160,.5)" stroke-width="1"/><path d="M543 421 H908 M592.3 421 V433 M669 421 V433 M746.4 421 V430 M822.8 421 V435 M899.5 421 V435" fill="none" stroke="#2fa6a9" stroke-width="1.6"/><rect x="918.5" y="405" width="24" height="11.5" fill="#293b41" stroke="#2fa6a9" stroke-width="1.2"/><rect x="918" y="420.5" width="25" height="12" fill="#2b9ea3"/></svg><div class="t" style="left:583.7px;width:40px;text-align:center;top:248.6px;font-size:14px;line-height:14px;color:#36b4ec;-webkit-text-stroke:0.35px #36b4ec">7d</div><div class="t" style="left:644.5px;width:40px;text-align:center;top:248.6px;font-size:14px;line-height:14px;color:#36b4ec;-webkit-text-stroke:0.35px #36b4ec">24h</div><div class="t" style="left:705.3px;width:40px;text-align:center;top:248.6px;font-size:14px;line-height:14px;color:#36b4ec;-webkit-text-stroke:0.35px #36b4ec">6h</div><div class="t" style="left:766.1px;width:40px;text-align:center;top:248.6px;font-size:14px;line-height:14px;color:#36b4ec;-webkit-text-stroke:0">60m</div><div class="t" style="left:826.9px;width:40px;text-align:center;top:248.6px;font-size:14px;line-height:14px;color:#30383e;-webkit-text-stroke:0">15m</div><div class="t" style="left:550.8px;top:317.18px;font-size:9px;line-height:9px;color:#acacac;font-weight:700;letter-spacing:-0.3px">15:07:30</div><div class="t" style="left:611.8px;top:317.18px;font-size:9px;line-height:9px;color:#acacac;font-weight:700;letter-spacing:-0.3px">15:10:00</div><div class="t" style="left:672.8px;top:317.18px;font-size:9px;line-height:9px;color:#acacac;font-weight:700;letter-spacing:-0.3px">15:12:30</div><div class="t" style="left:733.8px;top:317.18px;font-size:9px;line-height:9px;color:#acacac;font-weight:700;letter-spacing:-0.3px">15:15:00</div><div class="t" style="left:794.8px;top:317.18px;font-size:9px;line-height:9px;color:#acacac;font-weight:700;letter-spacing:-0.3px">15:17:30</div><div class="t" style="left:855.8px;top:317.18px;font-size:9px;line-height:9px;color:#acacac;font-weight:700;letter-spacing:-0.3px">15:20:00</div><div class="t" style="left:950.0px;top:406.19px;font-size:11px;line-height:11px;color:#e4e4e4;font-weight:700;letter-spacing:-0.2px">DF: 58624µs</div><div class="t" style="left:950.0px;top:421.19px;font-size:11px;line-height:11px;color:#e4e4e4;font-weight:700;letter-spacing:-0.2px">MLR: 0</div><div class="r" style="left:925px;top:240px;width:104px;height:34px;background:#32c0f7;box-shadow:0 1px 2px rgba(0,0,0,.4)"></div><div class="t" style="left:933.0px;top:252.27px;font-size:11.5px;line-height:11.5px;color:#26323c;font-weight:700;letter-spacing:-0.55px">DF : MLR</div><svg class="r" style="left:1012px;top:252px" width="12" height="9" viewBox="0 0 12 9"><path d="M2 1.8 L6 6 L10 1.8" fill="none" stroke="#26323c" stroke-width="1.9"/></svg><div class="t" style="left:21.3px;top:476.96px;font-size:16px;line-height:16px;color:#e8e9ea;font-weight:400;-webkit-text-stroke:0.45px #e8e9ea">Errors and Alerts</div><svg class="r" style="left:941px;top:476px" width="20" height="18" viewBox="0 0 20 18"><rect x="2.8" y="3.6" width="13.6" height="11.4" rx="1.6" fill="none" stroke="#dcdcdc" stroke-width="1.6"/><path d="M2.8 9.3 H16.4 M9.6 3.6 V15" stroke="#dcdcdc" stroke-width="2.2"/></svg><svg class="r" style="left:969px;top:476px" width="22" height="20" viewBox="0 0 22 20"><path d="M10 15.2 H4.2 Q2.8 15.2 2.8 13.8 V4.4 Q2.8 3 4.2 3 H15 Q16.4 3 16.4 4.4 V9" fill="none" stroke="#dcdcdc" stroke-width="1.6"/><path d="M2.8 8.8 H11 M9.6 3 V15" stroke="#dcdcdc" stroke-width="1.6"/><circle cx="14.6" cy="13.6" r="4.6" fill="#3d4148" stroke="#dcdcdc" stroke-width="1.5"/><path d="M14.2 11.3 V13.9 H16.2" fill="none" stroke="#dcdcdc" stroke-width="1.2"/></svg><svg class="r" style="left:999px;top:476px" width="20" height="20" viewBox="0 0 20 20" fill="#dcdcdc"><rect x="2" y="3" width="12" height="2" rx=".6"/><rect x="6" y="2" width="4" height="1.6"/><path d="M3.2 5.6 H12.8 V16.2 Q12.8 17.4 11.6 17.4 H4.4 Q3.2 17.4 3.2 16.2 Z"/><rect x="15.5" y="4.6" width="1.8" height="7"/><rect x="15.5" y="13" width="1.8" height="2"/></svg><div class="t" style="left:27.5px;top:534.39px;font-size:11px;line-height:11px;color:#8b8f94;font-weight:400;">Priority 1</div><div class="t" style="left:27.5px;top:568.39px;font-size:11px;line-height:11px;color:#8b8f94;font-weight:400;">Priority 2</div><div class="t" style="left:27.5px;top:602.39px;font-size:11px;line-height:11px;color:#8b8f94;font-weight:400;">Priority 3</div><div class="t" style="left:27.5px;top:636.39px;font-size:11px;line-height:11px;color:#8b8f94;font-weight:400;">T2MI</div><div class="c" style="left:81px;top:524px;background:#5cc2aa"></div><div class="t" style="left:89.0px;top:534.11px;font-size:10.5px;line-height:10.5px;color:#1d2a27;font-weight:400;letter-spacing:-0.4px">SYNC_LOSS</div><div class="b" style="left:121.5px;top:530px"><span style="background:rgba(20,30,28,.44);color:#bfe3d7">1</span></div><div class="c" style="left:175px;top:524px;background:#5cc2aa"></div><div class="t" style="left:183.0px;top:534.11px;font-size:10.5px;line-height:10.5px;color:#1d2a27;font-weight:400;letter-spacing:-0.4px">SB_E</div><div class="b" style="left:215.5px;top:530px"><span style="background:rgba(20,30,28,.44);color:#bfe3d7">2</span></div><div class="c" style="left:269px;top:524px;background:#5cc2aa"></div><div class="t" style="left:277.0px;top:534.11px;font-size:10.5px;line-height:10.5px;color:#1d2a27;font-weight:400;letter-spacing:-0.4px">PAT_2</div><div class="b" style="left:309.5px;top:530px"><span style="background:rgba(20,30,28,.44);color:#bfe3d7">2</span></div><div class="c" style="left:363px;top:524px;background:#5cc2aa"></div><div class="t" style="left:371.0px;top:534.11px;font-size:10.5px;line-height:10.5px;color:#1d2a27;font-weight:400;letter-spacing:-0.4px">CCE</div><div class="b" style="left:403.5px;top:530px"><span style="background:rgba(20,30,28,.44);color:#bfe3d7">8k</span></div><div class="c" style="left:457px;top:524px;background:#5cc2aa"></div><div class="t" style="left:465.0px;top:534.11px;font-size:10.5px;line-height:10.5px;color:#1d2a27;font-weight:400;letter-spacing:-0.4px">PMT_2</div><div class="c" style="left:550px;top:524px;background:#f47bbf"></div><div class="t" style="left:558.0px;top:534.11px;font-size:10.5px;line-height:10.5px;color:#2a1c24;font-weight:400;letter-spacing:-0.4px">PID_E</div><div class="b" style="left:590.5px;top:530px"><span style="background:rgba(40,10,30,.38);color:#eccbde">316.1k</span></div><div class="c" style="left:644px;top:524px;background:#212428"></div><div class="c" style="left:738px;top:524px;background:#212428"></div><div class="c" style="left:832px;top:524px;background:#212428"></div><div class="c" style="left:926px;top:524px;background:#212428"></div><div class="c" style="left:81px;top:558px;background:#5cc2aa"></div><div class="t" style="left:89.0px;top:568.11px;font-size:10.5px;line-height:10.5px;color:#1d2a27;font-weight:400;letter-spacing:-0.4px">TEI</div><div class="c" style="left:175px;top:558px;background:#5cc2aa"></div><div class="t" style="left:183.0px;top:568.11px;font-size:10.5px;line-height:10.5px;color:#1d2a27;font-weight:400;letter-spacing:-0.4px">CRC_E</div><div class="c" style="left:269px;top:558px;background:#5cc2aa"></div><div class="t" style="left:277.0px;top:568.11px;font-size:10.5px;line-height:10.5px;color:#1d2a27;font-weight:400;letter-spacing:-0.4px">PCR_REP</div><div class="c" style="left:363px;top:558px;background:#5cc2aa"></div><div class="t" style="left:371.0px;top:568.11px;font-size:10.5px;line-height:10.5px;color:#1d2a27;font-weight:400;letter-spacing:-0.4px">PCR_DISC</div><div class="b" style="left:403.5px;top:564px"><span style="background:rgba(20,30,28,.44);color:#bfe3d7">888</span></div><div class="c" style="left:457px;top:558px;background:#5cc2aa"></div><div class="t" style="left:465.0px;top:568.11px;font-size:10.5px;line-height:10.5px;color:#1d2a27;font-weight:400;letter-spacing:-0.4px">PCR_ACC</div><div class="b" style="left:497.5px;top:564px"><span style="background:rgba(20,30,28,.44);color:#bfe3d7">891</span></div><div class="c" style="left:550px;top:558px;background:#5cc2aa"></div><div class="t" style="left:558.0px;top:568.11px;font-size:10.5px;line-height:10.5px;color:#1d2a27;font-weight:400;letter-spacing:-0.4px">PTS_E</div><div class="c" style="left:644px;top:558px;background:#5cc2aa"></div><div class="t" style="left:652.0px;top:568.11px;font-size:10.5px;line-height:10.5px;color:#1d2a27;font-weight:400;letter-spacing:-0.4px">CAT_E</div><div class="c" style="left:738px;top:558px;background:#212428"></div><div class="c" style="left:832px;top:558px;background:#212428"></div><div class="c" style="left:926px;top:558px;background:#212428"></div><div class="c" style="left:81px;top:592px;background:#5cc2aa"></div><div class="t" style="left:89.0px;top:602.11px;font-size:10.5px;line-height:10.5px;color:#1d2a27;font-weight:400;letter-spacing:-0.4px">NIT_ACT</div><div class="b" style="left:121.5px;top:598px"><span style="background:rgba(20,30,28,.44);color:#bfe3d7">2</span></div><div class="c" style="left:175px;top:592px;background:#f47bbf"></div><div class="t" style="left:183.0px;top:602.11px;font-size:10.5px;line-height:10.5px;color:#2a1c24;font-weight:400;letter-spacing:-0.4px">NIT_OTH</div><div class="b" style="left:215.5px;top:598px"><span style="background:rgba(40,10,30,.38);color:#eccbde">16.8k</span></div><div class="c" style="left:269px;top:592px;background:#5cc2aa"></div><div class="t" style="left:277.0px;top:602.11px;font-size:10.5px;line-height:10.5px;color:#1d2a27;font-weight:400;letter-spacing:-0.4px">SI_REP</div><div class="c" style="left:363px;top:592px;background:#5cc2aa"></div><div class="t" style="left:371.0px;top:602.11px;font-size:10.5px;line-height:10.5px;color:#1d2a27;font-weight:400;letter-spacing:-0.4px">UNR_PID</div><div class="c" style="left:457px;top:592px;background:#5cc2aa"></div><div class="t" style="left:465.0px;top:602.11px;font-size:10.5px;line-height:10.5px;color:#1d2a27;font-weight:400;letter-spacing:-0.4px">SDT_ACT</div><div class="b" style="left:497.5px;top:598px"><span style="background:rgba(20,30,28,.44);color:#bfe3d7">2</span></div><div class="c" style="left:550px;top:592px;background:#f47bbf"></div><div class="t" style="left:558.0px;top:602.11px;font-size:10.5px;line-height:10.5px;color:#2a1c24;font-weight:400;letter-spacing:-0.4px">SDT_OTH</div><div class="b" style="left:590.5px;top:598px"><span style="background:rgba(40,10,30,.38);color:#eccbde">16.8k</span></div><div class="c" style="left:644px;top:592px;background:#212428"></div><div class="t" style="left:652.0px;top:602.11px;font-size:10.5px;line-height:10.5px;color:#6b6f74;font-weight:700;letter-spacing:-0.4px">EIT_AE</div><div class="c" style="left:738px;top:592px;background:#212428"></div><div class="t" style="left:746.0px;top:602.11px;font-size:10.5px;line-height:10.5px;color:#6b6f74;font-weight:700;letter-spacing:-0.4px">EIT_OE</div><div class="c" style="left:832px;top:592px;background:#212428"></div><div class="t" style="left:840.0px;top:602.11px;font-size:10.5px;line-height:10.5px;color:#6b6f74;font-weight:700;letter-spacing:-0.4px">EIT_PFE</div><div class="c" style="left:926px;top:592px;background:#5cc2aa"></div><div class="t" style="left:934.0px;top:602.11px;font-size:10.5px;line-height:10.5px;color:#1d2a27;font-weight:400;letter-spacing:-0.4px">TDT_E</div><div class="b" style="left:966.5px;top:598px"><span style="background:rgba(20,30,28,.44);color:#bfe3d7">1</span></div><div class="c" style="left:81px;top:627px;background:#212428"></div><div class="t" style="left:89.0px;top:636.51px;font-size:10.5px;line-height:10.5px;color:#6b6f74;font-weight:700;letter-spacing:-0.4px">PT_E1</div><div class="c" style="left:175px;top:627px;background:#212428"></div><div class="t" style="left:183.0px;top:636.51px;font-size:10.5px;line-height:10.5px;color:#6b6f74;font-weight:700;letter-spacing:-0.4px">PT_E2</div><div class="c" style="left:269px;top:627px;background:#212428"></div><div class="t" style="left:277.0px;top:636.51px;font-size:10.5px;line-height:10.5px;color:#6b6f74;font-weight:700;letter-spacing:-0.4px">PC_E</div><div class="c" style="left:363px;top:627px;background:#212428"></div><div class="t" style="left:371.0px;top:636.51px;font-size:10.5px;line-height:10.5px;color:#6b6f74;font-weight:700;letter-spacing:-0.4px">PAY_E</div><div class="c" style="left:457px;top:627px;background:#212428"></div><div class="t" style="left:465.0px;top:636.51px;font-size:10.5px;line-height:10.5px;color:#6b6f74;font-weight:700;letter-spacing:-0.4px">PLP_NB_E</div><div class="c" style="left:550px;top:627px;background:#212428"></div><div class="t" style="left:558.0px;top:636.51px;font-size:10.5px;line-height:10.5px;color:#6b6f74;font-weight:700;letter-spacing:-0.4px">TO_E</div><div class="c" style="left:644px;top:627px;background:#212428"></div><div class="t" style="left:652.0px;top:636.51px;font-size:10.5px;line-height:10.5px;color:#6b6f74;font-weight:700;letter-spacing:-0.4px">TSTM_E</div><div class="c" style="left:738px;top:627px;background:#212428"></div><div class="t" style="left:746.0px;top:636.51px;font-size:10.5px;line-height:10.5px;color:#6b6f74;font-weight:700;letter-spacing:-0.4px">TDSC_E</div><div class="c" style="left:832px;top:627px;background:#212428"></div><div class="t" style="left:840.0px;top:636.51px;font-size:10.5px;line-height:10.5px;color:#6b6f74;font-weight:700;letter-spacing:-0.4px">FL_E</div><div class="c" style="left:926px;top:627px;background:#212428"></div><svg class="r" style="left:0;top:0" width="1041" height="665"><path d="M577.5 402.5 L499 509" stroke="#ff0000" stroke-width="4.6" stroke-linecap="butt"/><polygon points="492.2,518.8 493,503.5 507.2,511.2" fill="#ff0000"/></svg>
</body></html>
